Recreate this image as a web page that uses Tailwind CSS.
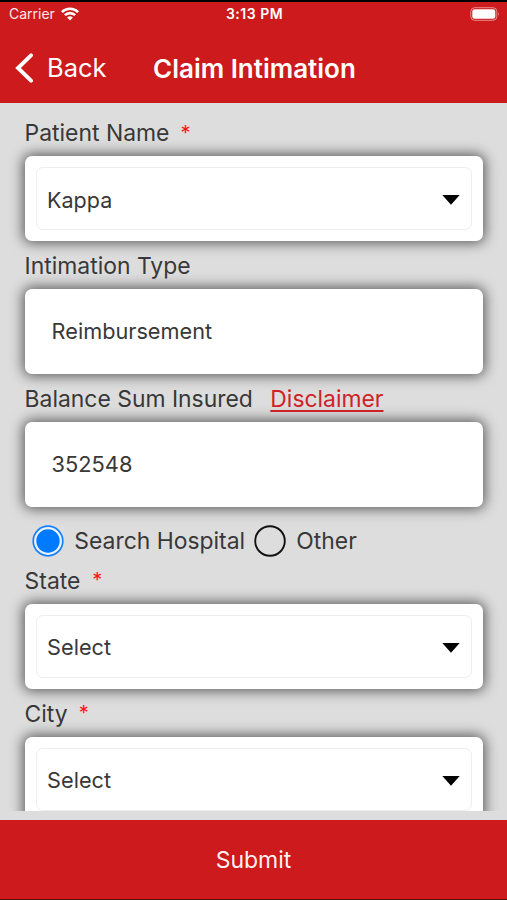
<!DOCTYPE html>
<html lang="en">
<head>
<meta charset="utf-8">
<title>Claim Intimation</title>
<script src="https://cdn.jsdelivr.net/npm/@tailwindcss/browser@4"></script>
</head>
<body class="h-[900px] w-[507px] overflow-hidden bg-[#dddddd] font-[Inter,sans-serif] text-[#383838]">
<div class="flex h-[900px] flex-col">
  <header class="h-[103px] shrink-0 border-t-2 border-black bg-[#cc1a1d] text-white">
    <div class="grid h-[24px] grid-cols-3 items-center pl-[9px] pr-[7px] text-[14px] leading-none">
      <div class="flex items-center gap-[6px] text-white/90"><span>Carrier</span>
        <svg class="h-[14px] w-[18px]" viewBox="0 0 18 14" fill="none" stroke="white" stroke-width="2.6"><path d="M.9 5.1a11.5 11.5 0 0 1 16.2 0M3.9 8.2a7.2 7.2 0 0 1 10.2 0"/><path d="M9 13.6 6.1 10.6a4.1 4.1 0 0 1 5.8 0z" fill="white" stroke="none"/></svg>
      </div>
      <div class="whitespace-nowrap text-center text-[14px] font-semibold tracking-[0.5px]">3:13 PM</div>
      <svg class="h-[14px] w-[30px] justify-self-end" viewBox="0 0 30 14"><rect x=".8" y=".7" width="26" height="12.6" rx="3.8" fill="none" stroke="white" stroke-opacity=".5"/><rect x="2.3" y="2.3" width="23" height="9.4" rx="2.2" fill="white"/><path d="M28.2 4.9q1.6 2.1 0 4.2z" fill="white" fill-opacity=".6"/></svg>
    </div>
    <div class="flex h-[77px] items-center pl-[14px] pt-[7px]">
      <svg class="h-[30px] w-[19px]" viewBox="0 0 19 30" fill="none" stroke="white" stroke-width="3.9" stroke-linecap="round" stroke-linejoin="miter"><path d="M17 2.3 4 15l13 12.7"/></svg>
      <span class="ml-[14px] w-[106px] pt-px text-[25.5px]">Back</span>
      <h1 class="whitespace-nowrap text-[26px] font-semibold">Claim Intimation</h1>
    </div>
  </header>

  <main class="h-[708px] shrink-0 overflow-hidden pl-[24.6px] pr-[24px] pt-[5.4px] text-[22.9px]">
    <div class="flex h-[47.5px] items-center whitespace-nowrap pt-[2px]">Patient Name<span class="ml-[11px] text-[20px] leading-[25px] text-[#ff1414]">*</span></div>
    <div class="h-[85.5px] rounded-[7px] bg-white p-[11px] shadow-[0_0_13px_2px_rgba(0,0,0,0.6)]">
      <div class="flex h-[63.5px] items-center justify-between rounded-[7px] border border-[#eeeeee] pl-[10.5px] pr-[11px] text-[21.5px]"><span class="pt-[2px]">Kappa</span><svg class="mt-[3px] h-[10px] w-[18px]" viewBox="0 0 18 10"><path d="M.3 0h17.4L9 9.7z"/></svg></div>
    </div>
    <div class="flex h-[47.5px] items-center whitespace-nowrap pt-[2px]">Intimation Type</div>
    <div class="flex h-[85.5px] items-center rounded-[7px] bg-white pl-[27px] text-[21.7px] shadow-[0_0_13px_2px_rgba(0,0,0,0.6)]">Reimbursement</div>
    <div class="flex h-[47.5px] items-center whitespace-nowrap pt-[2px]">Balance Sum Insured<span class="ml-[17.5px] text-[#cf2228] underline decoration-2 underline-offset-[3px]">Disclaimer</span></div>
    <div class="flex h-[85.5px] items-center rounded-[7px] bg-white pl-[27px] text-[21.8px] shadow-[0_0_13px_2px_rgba(0,0,0,0.6)]">352548</div>
    <div class="flex h-[48.7px] items-center whitespace-nowrap pl-[7.7px] pt-[18px]">
      <svg class="size-[32px] shrink-0" viewBox="0 0 32 32"><circle cx="16" cy="16" r="14.8" fill="#eaf3fc" stroke="#1681f7" stroke-width="1.7"/><circle cx="16" cy="16" r="11.7" fill="#007aff"/></svg>
      <span class="ml-[10px] w-[180px]">Search Hospital</span>
      <svg class="size-[32px] shrink-0" viewBox="0 0 32 32"><circle cx="16" cy="16" r="14.8" fill="none" stroke="#111" stroke-width="1.9"/></svg>
      <span class="ml-[10px]">Other</span>
    </div>
    <div class="flex h-[47.5px] items-center whitespace-nowrap pt-[2px]">State<span class="ml-[12px] text-[20px] leading-[25px] text-[#ff1414]">*</span></div>
    <div class="h-[85.5px] rounded-[7px] bg-white p-[11px] shadow-[0_0_13px_2px_rgba(0,0,0,0.6)]">
      <div class="flex h-[63.5px] items-center justify-between rounded-[7px] border border-[#eeeeee] pl-[10.5px] pr-[11px] text-[21.7px]"><span class="pt-px">Select</span><svg class="mt-[3px] h-[10px] w-[18px]" viewBox="0 0 18 10"><path d="M.3 0h17.4L9 9.7z"/></svg></div>
    </div>
    <div class="flex h-[47.5px] items-center whitespace-nowrap pt-[2px]">City<span class="ml-[11px] text-[20px] leading-[25px] text-[#ff1414]">*</span></div>
    <div class="h-[85.5px] rounded-[7px] bg-white p-[11px] shadow-[0_0_13px_2px_rgba(0,0,0,0.6)]">
      <div class="flex h-[63.5px] items-center justify-between rounded-[7px] border border-[#eeeeee] pl-[10.5px] pr-[11px] text-[21.7px]"><span class="pt-px">Select</span><svg class="mt-[3px] h-[10px] w-[18px]" viewBox="0 0 18 10"><path d="M.3 0h17.4L9 9.7z"/></svg></div>
    </div>
  </main>

  <button class="mt-[9px] flex h-[80px] shrink-0 items-center justify-center border-b border-[#5a0c0e] bg-[#cc1a1d] pt-[2px] text-[23px] text-white/95">Submit</button>
</div>
</body>
</html>
